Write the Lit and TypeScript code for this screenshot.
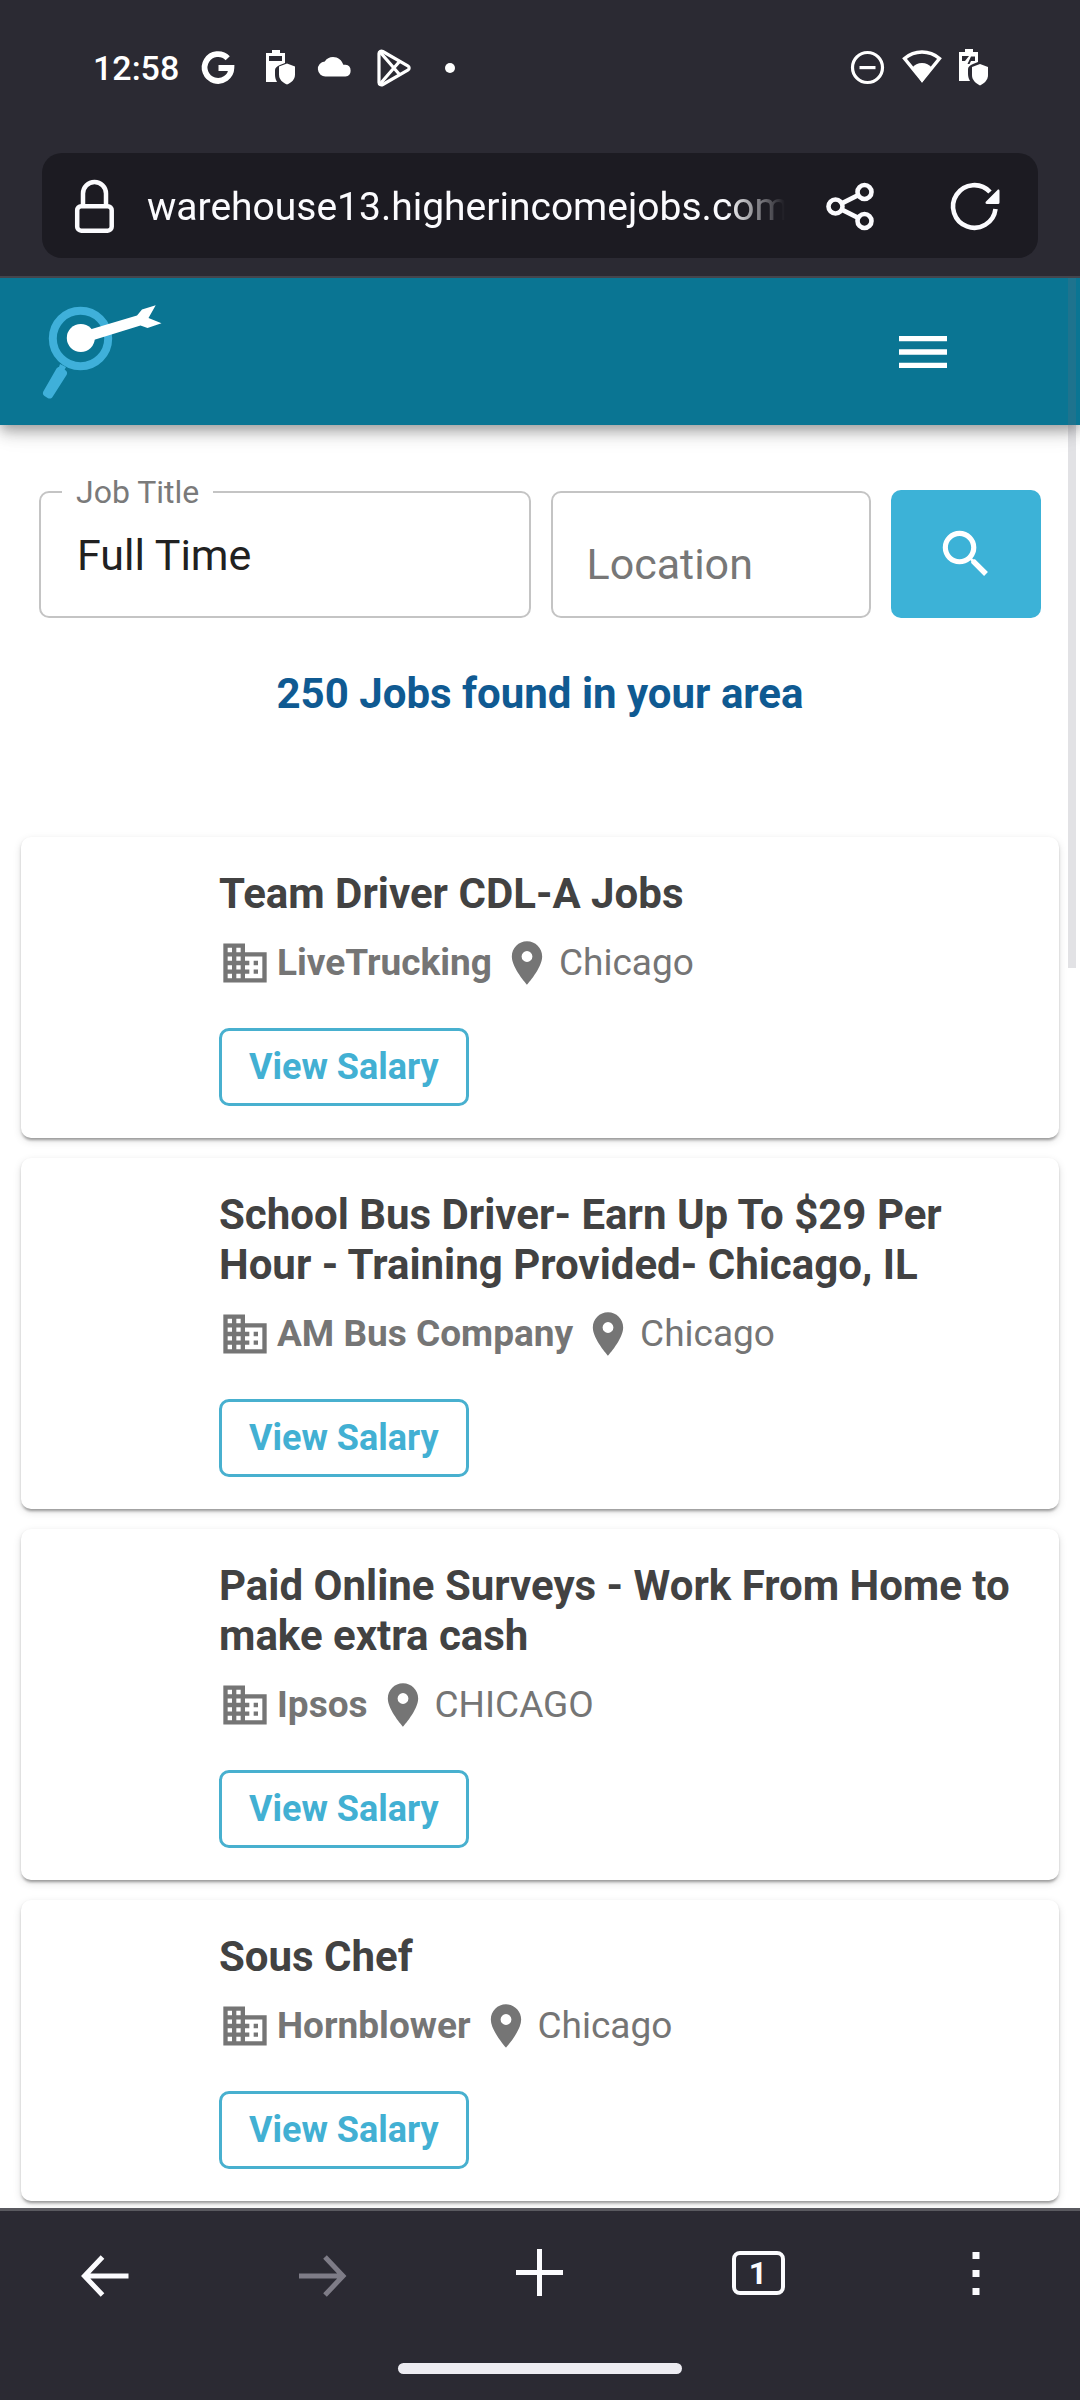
import { LitElement, html, css, nothing } from "lit";
import { customElement, property } from "lit/decorators.js";

interface Job {
  title: string;
  company: string;
  city: string;
}

const JOBS: Job[] = [
  { title: "Team Driver CDL-A Jobs", company: "LiveTrucking", city: "Chicago" },
  {
    title: "School Bus Driver- Earn Up To $29 Per Hour - Training Provided- Chicago, IL",
    company: "AM Bus Company",
    city: "Chicago",
  },
  {
    title: "Paid Online Surveys - Work From Home to make extra cash",
    company: "Ipsos",
    city: "CHICAGO",
  },
  { title: "Sous Chef", company: "Hornblower", city: "Chicago" },
];

@customElement("status-bar")
export class StatusBar extends LitElement {
  static styles = css`
    :host {
      display: flex;
      align-items: center;
      height: 136px;
      padding: 0 90px 0 93px;
      color: #fff;
    }
    svg {
      display: block;
      fill: currentColor;
    }
    .time {
      font-size: 34px;
      font-weight: 500;
      line-height: 40px;
    }
    .notices,
    .system {
      display: flex;
      align-items: center;
    }
    .notices {
      gap: 20px;
      margin-left: 20px;
    }
    .system {
      gap: 14px;
      margin-left: auto;
    }
  `;

  render() {
    return html`
      <span class="time">12:58</span>
      <div class="notices">
        <svg width="38" height="40" viewBox="0 0 38 40" aria-hidden="true">
          <path
            d="M28.700 10.300A13.400 13.400 0 1 0 32.400 20H19.500"
            fill="none"
            stroke="currentColor"
            stroke-width="5.800"
          />
        </svg>
        <svg width="40" height="40" viewBox="-6 0 40 40" aria-hidden="true">
          <path
            fill-rule="evenodd"
            d="M9 2h8v3h5v10l-5 2c-3 1-5 3-5 5v5c0 3 1 5 2 7H3V5h6zM6 8v5h13V8z"
          />
          <path d="M24 15.500l8 3v8c0 5-3.400 8-8 10-4.600-2-8-5-8-10v-8z" />
        </svg>
        <svg width="38" height="40" viewBox="0 0 38 40" aria-hidden="true">
          <path
            d="M9 28.500a7.500 7.500 0 0 1-1.200-15C9.500 10.700 12.500 9 16 9c5 0 9 3.300 10.300 7.800h2.200a5.900 5.900 0 0 1 0 11.700z"
          />
        </svg>
        <svg width="40" height="40" viewBox="2 0 40 40" aria-hidden="true">
          <g fill="none" stroke="currentColor" stroke-width="3.200" stroke-linejoin="round">
            <path d="M6 5.500c0-2 2-3 3.800-2l25 14.300c1.800 1 1.800 3.400 0 4.400l-25 14.300c-1.800 1-3.800 0-3.800-2z" />
            <path d="M7 4l19.500 22.500M7 36l19.500-22.500" />
          </g>
        </svg>
        <svg width="50" height="40" viewBox="0 0 50 40" aria-hidden="true">
          <circle cx="15" cy="20" r="5" />
        </svg>
      </div>
      <div class="system">
        <svg width="38" height="40" viewBox="0 0 38 40" aria-hidden="true">
          <circle cx="17.500" cy="19.500" r="15" fill="none" stroke="currentColor" stroke-width="3.200" />
          <path d="M9.500 18h16v3.200h-16z" />
        </svg>
        <svg width="40" height="40" viewBox="0 0 40 40" aria-hidden="true">
          <path
            d="M20 32L2.500 10.500C7.500 6.200 13.500 4 20 4s12.500 2.200 17.500 6.500z"
            fill="none"
            stroke="currentColor"
            stroke-width="3.400"
          />
          <path d="M20 34.500L10 20c2.600-3.300 6-5 10-5s7.400 1.700 10 5z" />
        </svg>
        <svg width="34" height="40" viewBox="0 0 34 40" aria-hidden="true">
          <path
            fill-rule="evenodd"
            d="M9 1h8v3h5v10l-5 2c-3 1-5 3-5 5v5c0 3 1 5 2 7H3V4h6zM6 8v5h3l4-5zM15 8.500L11.500 16h2l1.500-3v0h4V8.500z"
          />
          <path d="M24 16l8 3v8c0 5-3.400 8-8 10.500-4.600-2.500-8-5.500-8-10.500v-8z" />
        </svg>
      </div>
    `;
  }
}

@customElement("address-bar")
export class AddressBar extends LitElement {
  static styles = css`
    :host {
      display: block;
      padding: 17px 42px 18px;
      border-bottom: 2px solid #44454d;
      color: #fbfbfe;
    }
    .pill {
      display: flex;
      align-items: center;
      height: 105px;
      padding: 0 27px 0 20px;
      border-radius: 20px;
      background: #1c1b22;
    }
    svg {
      display: block;
    }
    .lock {
      flex: none;
    }
    .url {
      flex: 1;
      min-width: 0;
      height: 64px;
      margin: 0 29px 0 20px;
      padding: 3px 0 0;
      border: 0;
      outline: 0;
      background: none;
      color: inherit;
      font: 400 39px / 60px Roboto, "Liberation Sans", sans-serif;
      -webkit-mask-image: linear-gradient(to left, transparent 0, #000 58px);
      mask-image: linear-gradient(to left, transparent 0, #000 58px);
    }
    .action {
      flex: none;
      width: 72px;
      height: 72px;
      padding: 0;
      border: 0;
      background: none;
      color: inherit;
    }
    .action + .action {
      margin-left: 53px;
    }
    .action svg {
      margin: auto;
    }
  `;

  render() {
    return html`
      <div class="pill">
        <svg class="lock" width="65" height="60" viewBox="0 0 65 60" role="img" aria-label="Secure">
          <g fill="none" stroke="currentColor" stroke-width="4.500">
            <rect x="15.200" y="30.200" width="34.500" height="24.500" rx="4" />
            <path d="M21 30V17.500a11.500 11.500 0 0 1 23 0V30" />
          </g>
        </svg>
        <input class="url" type="text" aria-label="Address" value="warehouse13.higherincomejobs.com" />
        <button class="action" type="button" aria-label="Share">
          <svg width="60" height="60" viewBox="0 0 60 60">
            <g fill="none" stroke="currentColor" stroke-width="4.600">
              <circle cx="15.500" cy="30.500" r="7" />
              <circle cx="44.500" cy="16" r="7" />
              <circle cx="44.500" cy="45" r="7" />
              <path d="M21.800 27.400l16.400-8.300M21.800 33.600l16.400 8.300" />
            </g>
          </svg>
        </button>
        <button class="action" type="button" aria-label="Reload">
          <svg width="60" height="60" viewBox="0 0 60 60">
            <path
              d="M50.500 33A21.300 21.300 0 1 1 45 16"
              fill="none"
              stroke="currentColor"
              stroke-width="4.600"
            />
            <path
              d="M54.500 15v11.500a1.500 1.500 0 0 1-1.500 1.500H42c-1.500 0-2-1.500-1-2.500L52.500 14c.800-.800 2-.300 2 1z"
              fill="currentColor"
            />
          </svg>
        </button>
      </div>
    `;
  }
}

@customElement("site-header")
export class SiteHeader extends LitElement {
  static styles = css`
    :host {
      position: relative;
      display: flex;
      align-items: center;
      justify-content: space-between;
      height: 147px;
      padding: 0 125px 0 40px;
      background: #0a7593;
      box-shadow:
        0 5px 10px -2px rgba(0, 0, 0, 0.22),
        0 10px 13px 0 rgba(0, 0, 0, 0.14),
        0 3px 26px 0 rgba(0, 0, 0, 0.12);
    }
    svg {
      display: block;
    }
    .menu {
      padding: 0;
      border: 0;
      background: none;
      color: #fff;
    }
  `;

  render() {
    return html`
      <a href="#" aria-label="Home">
        <svg width="126" height="100" viewBox="0 0 126 100">
          <circle cx="40.500" cy="36.500" r="27.700" fill="none" stroke="#3fb0da" stroke-width="8" />
          <path
            d="M21 65.500l4.500 2.700c1.600 1 2 3 1.200 4.600L12.500 95c-1 1.600-2.800 2-4.500 1.200L4.500 94c-1.700-1-2-3-1.200-4.500L16.500 66.500c1-1.500 2.800-2 4.500-1z"
            fill="#3fb0da"
          />
          <path d="M20 62l6 3-3 6-5-3z" fill="#3fb0da" />
          <circle cx="40.800" cy="36" r="14" fill="#fff" />
          <path d="M50 27.500L97 13.500l5-6 13.700-4.200L108.500 16l13 5.200-14 4.800-7-2.400L52 38.500z" fill="#fff" />
        </svg>
      </a>
      <button class="menu" type="button" aria-label="Menu">
        <svg width="64" height="64" viewBox="0 0 24 24">
          <path d="M3 18h18v-2H3v2zm0-5h18v-2H3v2zm0-7v2h18V6H3z" fill="currentColor" />
        </svg>
      </button>
    `;
  }
}

@customElement("job-search")
export class JobSearch extends LitElement {
  static styles = css`
    :host {
      display: block;
      padding: 48px 39px 0;
    }
    form {
      display: grid;
      grid-template-columns: 491fr 320fr 150fr;
      column-gap: 20px;
      align-items: end;
    }
    fieldset {
      min-width: 0;
      margin: 0;
      padding: 0;
      border: 2px solid #c4c4c4;
      border-radius: 10px;
    }
    legend {
      margin-left: 21px;
      padding: 0 14px;
      color: #7a7a7a;
      font-size: 32px;
      line-height: 38px;
    }
    input {
      display: block;
      box-sizing: border-box;
      width: 100%;
      height: 123px;
      padding: 0 36px;
      border: 0;
      outline: 0;
      background: none;
      color: #212121;
      font: 400 43px / 50px Roboto, "Liberation Sans", sans-serif;
    }
    .title {
      height: 105px;
      padding-bottom: 18px;
    }
    .location {
      padding: 18px 34px 0;
    }
    input::placeholder {
      color: #777;
      opacity: 1;
    }
    .go {
      display: grid;
      place-items: center;
      height: 128px;
      padding: 0;
      border: 0;
      border-radius: 10px;
      background: #3cb2d7;
      color: #fff;
    }
  `;

  render() {
    return html`
      <form @submit=${(e: Event) => e.preventDefault()}>
        <fieldset>
          <legend><label for="job-title">Job Title</label></legend>
          <input class="title" id="job-title" type="text" value="Full Time" />
        </fieldset>
        <fieldset>
          <input class="location" type="text" aria-label="Location" placeholder="Location" />
        </fieldset>
        <button class="go" type="submit" aria-label="Search">
          <svg width="62" height="62" viewBox="0 0 24 24">
            <path
              fill="currentColor"
              d="M15.500 14h-.790l-.280-.270A6.471 6.471 0 0 0 16 9.500 6.500 6.500 0 1 0 9.500 16c1.610 0 3.090-.590 4.230-1.570l.270.280v.790l5 4.990L20.490 19l-4.990-5zm-6 0C7.010 14 5 11.990 5 9.500S7.010 5 9.500 5 14 7.010 14 9.500 11.990 14 9.500 14z"
            />
          </svg>
        </button>
      </form>
    `;
  }
}

@customElement("job-card")
export class JobCard extends LitElement {
  @property({ attribute: false }) job?: Job;

  static styles = css`
    :host {
      display: block;
      padding: 32px 40px 32px 198px;
      border-radius: 10px;
      background: #fff;
      box-shadow:
        0 4px 3px -2px rgba(0, 0, 0, 0.22),
        0 2px 3px 0 rgba(0, 0, 0, 0.16),
        0 3px 8px 0 rgba(0, 0, 0, 0.12);
    }
    h2 {
      margin: 0 0 18px;
      color: #424242;
      font-size: 42px;
      font-weight: 700;
      line-height: 50px;
    }
    .meta {
      display: flex;
      align-items: center;
      gap: 6px;
      margin-bottom: 39px;
      color: #757575;
      font-size: 37px;
      line-height: 52px;
    }
    .meta svg {
      flex: none;
      fill: currentColor;
    }
    .company {
      margin-right: 3px;
      font-weight: 700;
    }
    button {
      display: block;
      height: 78px;
      padding: 0 27px;
      border: 3px solid #48b0cf;
      border-radius: 10px;
      background: #fff;
      color: #42b0d3;
      font: 700 36px / 50px Roboto, "Liberation Sans", sans-serif;
    }
  `;

  render() {
    if (!this.job) return nothing;
    return html`
      <h2>${this.job.title}</h2>
      <div class="meta">
        <svg width="52" height="52" viewBox="0 0 24 24" aria-hidden="true">
          <path
            d="M12 7V3H2v18h20V7H12zM6 19H4v-2h2v2zm0-4H4v-2h2v2zm0-4H4V9h2v2zm0-4H4V5h2v2zm4 12H8v-2h2v2zm0-4H8v-2h2v2zm0-4H8V9h2v2zm0-4H8V5h2v2zm10 12h-8v-2h2v-2h-2v-2h2v-2h-2V9h8v10zm-2-8h-2v2h2v-2zm0 4h-2v2h2v-2z"
          />
        </svg>
        <span class="company">${this.job.company}</span>
        <svg width="52" height="52" viewBox="0 0 24 24" aria-hidden="true">
          <path
            d="M12 2C8.130 2 5 5.130 5 9c0 5.250 7 13 7 13s7-7.750 7-13c0-3.870-3.130-7-7-7zm0 9.500a2.500 2.500 0 0 1 0-5 2.500 2.500 0 0 1 0 5z"
          />
        </svg>
        <span>${this.job.city}</span>
      </div>
      <button type="button">View Salary</button>
    `;
  }
}

@customElement("browser-nav")
export class BrowserNav extends LitElement {
  static styles = css`
    :host {
      display: block;
      border-top: 3px solid #5a5a60;
      background: #2b2a33;
      color: #fbfbfe;
    }
    nav {
      display: flex;
      align-items: center;
      justify-content: space-between;
      padding: 30px 72px;
    }
    button {
      width: 64px;
      height: 64px;
      padding: 0;
      border: 0;
      background: none;
      color: inherit;
    }
    button:disabled {
      color: #7e7c87;
    }
    svg {
      display: block;
      fill: none;
      stroke: currentColor;
      stroke-width: 5px;
    }
    .tabs {
      display: grid;
      place-items: center;
    }
    .count {
      box-sizing: border-box;
      width: 53px;
      height: 44px;
      border: 4px solid currentColor;
      border-radius: 8px;
      font: 700 32px / 36px Roboto, "Liberation Sans", sans-serif;
    }
    .handle {
      width: 284px;
      height: 11px;
      margin: 28px auto 26px;
      border-radius: 6px;
      background: #edecf2;
    }
  `;

  render() {
    return html`
      <nav aria-label="Browser">
        <button type="button" aria-label="Back">
          <svg width="64" height="64" viewBox="0 0 64 64">
            <path d="M56.500 35H12.500M30.500 16l-18 19 18 19" />
          </svg>
        </button>
        <button type="button" aria-label="Forward" disabled>
          <svg width="64" height="64" viewBox="0 0 64 64">
            <path d="M9 35h44M35 16l18 19-18 19" />
          </svg>
        </button>
        <button type="button" aria-label="New tab">
          <svg width="64" height="64" viewBox="0 0 64 64">
            <path d="M8 31.500h47M31.500 8v47" />
          </svg>
        </button>
        <button class="tabs" type="button" aria-label="Tabs"><span class="count">1</span></button>
        <button type="button" aria-label="More">
          <svg width="64" height="64" viewBox="0 0 64 64">
            <path d="M28.500 11h7v7h-7zM28.500 29h7v7h-7zM28.500 47h7v7h-7z" fill="currentColor" stroke="none" />
          </svg>
        </button>
      </nav>
      <div class="handle"></div>
    `;
  }
}

@customElement("app-root")
export class AppRoot extends LitElement {
  static styles = css`
    :host {
      display: flex;
      flex-direction: column;
      min-height: 100vh;
      background: #2b2a33;
      font-family: Roboto, "Liberation Sans", sans-serif;
    }
    .page {
      position: relative;
      flex: 1;
      overflow: hidden;
      background: #fff;
    }
    .found {
      margin: 51px 39px 0;
      color: #0f5a92;
      font-size: 42px;
      font-weight: 700;
      line-height: 50px;
      text-align: center;
    }
    .jobs {
      display: grid;
      gap: 20px;
      margin: 0;
      padding: 118px 21px 7px;
      list-style: none;
    }
    .thumb {
      position: absolute;
      top: 0;
      right: 4px;
      width: 8px;
      height: 690px;
      background: rgba(110, 110, 125, 0.2);
    }
  `;

  render() {
    return html`
      <status-bar></status-bar>
      <address-bar></address-bar>
      <div class="page">
        <site-header></site-header>
        <main>
          <job-search></job-search>
          <h1 class="found">250 Jobs found in your area</h1>
          <ul class="jobs">
            ${JOBS.map((job) => html`<li><job-card .job=${job}></job-card></li>`)}
          </ul>
        </main>
        <div class="thumb"></div>
      </div>
      <browser-nav></browser-nav>
    `;
  }
}
